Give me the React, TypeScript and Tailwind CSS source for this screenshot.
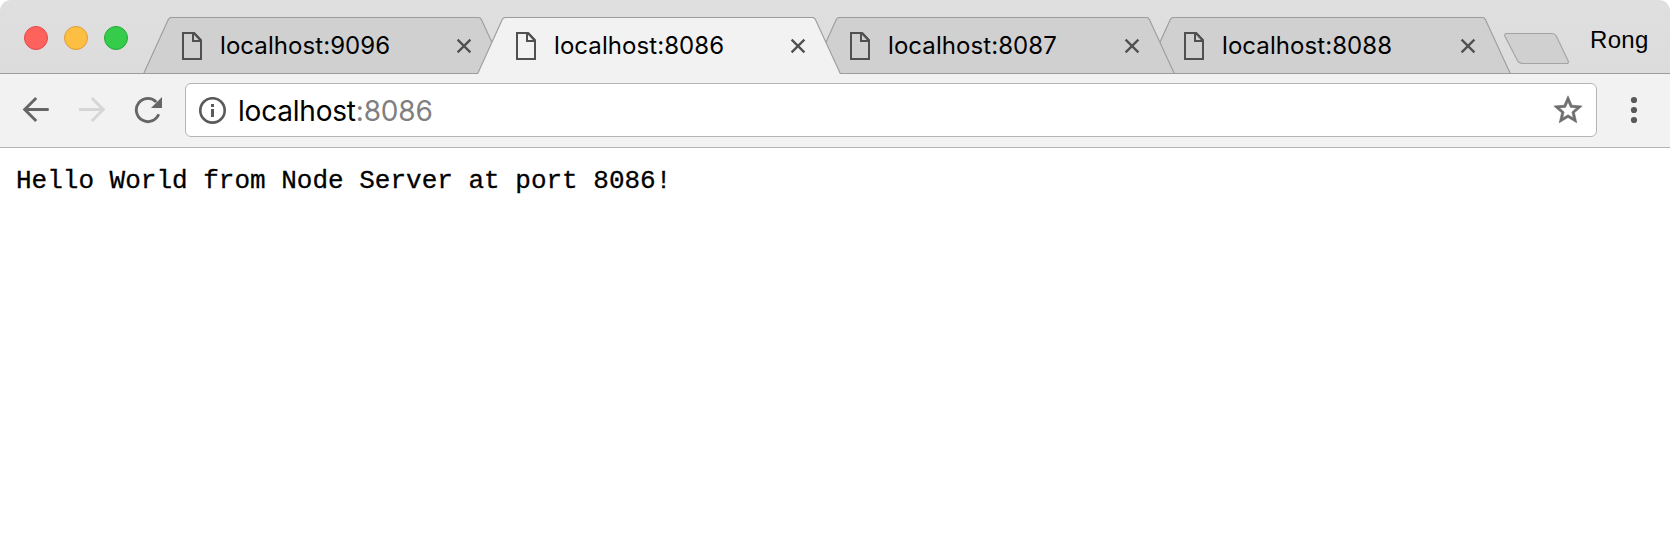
import React from "react";

type TabProps = {
  title: string;
  active?: boolean;
  stack: string;
  wide?: boolean;
};

function PageIcon() {
  return (
    <svg className="block h-7 w-5 shrink-0" viewBox="0 0 20 28" fill="none">
      <path d="M1 1H12L19 8.5V27H1Z" stroke="#505050" strokeWidth="2" />
      <path d="M11 1V9H19" stroke="#505050" strokeWidth="2" />
      <path d="M12 1L19 8.5" stroke="#505050" strokeWidth="2.2" />
    </svg>
  );
}

function CloseIcon() {
  return (
    <svg className="block h-4 w-4 shrink-0" viewBox="0 0 16 16">
      <path d="M1.6 1.6L14.4 14.4M14.4 1.6L1.6 14.4" stroke="#505050" strokeWidth="2.3" fill="none" />
    </svg>
  );
}

function Tab({ title, active = false, stack, wide = false }: TabProps) {
  const w = wide ? 366 : 364;
  const fill = active ? "#f2f2f2" : "#d0d0d0";
  const shape = `M0.5 57L25.3 2.6Q26.2 0.5 28.5 0.5H${w - 28.5}Q${w - 26.6} 0.5 ${w - 25.6} 2.6L${w - 0.5} 57`;
  return (
    <div
      className={`relative -mr-[30px] flex h-[57px] shrink-0 items-start pl-[39px] pt-[15px] ${
        wide ? "w-[366px]" : "w-[364px]"
      } ${stack}`}
    >
      <svg className="absolute inset-0 h-full w-full" viewBox={`0 0 ${w} 57`}>
        <path d={shape} fill={fill} stroke="#9c9c9c" strokeWidth="1.1" />
        {!active && <path d={`M0 56.5H${w}`} stroke="#9c9c9c" />}
      </svg>
      <div className="relative flex w-full items-start">
        <PageIcon />
        <span className="ml-[18px] h-7 w-[228px] whitespace-nowrap font-['Inter','Liberation_Sans',sans-serif] text-[24px] leading-7 tracking-[0.07px] text-black">
          {title}
        </span>
        <span className={wide ? "ml-[10px] mt-1.5" : "ml-2 mt-1.5"}>
          <CloseIcon />
        </span>
      </div>
    </div>
  );
}

export default function App() {
  return (
    <div className="h-[544px] w-[1670px] overflow-hidden bg-white">
      <header className="h-[74px] rounded-t-[11px] bg-[linear-gradient(#dfdfdf,#dcdcdc)]">
        <div className="flex h-[74px] items-start border-b border-[#9c9c9c]">
          <div className="flex w-[143px] shrink-0 gap-4 pl-6 pt-[26px]">
            <span className="h-6 w-6 rounded-full border border-[#e2494a] bg-[#fe625d]" />
            <span className="h-6 w-6 rounded-full border border-[#de9c35] bg-[#fdbf42]" />
            <span className="h-6 w-6 rounded-full border border-[#24a935] bg-[#35cb4b]" />
          </div>
          <div className="isolate mt-[17px] flex shrink-0">
            <Tab title="localhost:9096" stack="z-30" />
            <Tab title="localhost:8086" stack="z-40" active />
            <Tab title="localhost:8087" stack="z-20" />
            <Tab title="localhost:8088" stack="z-10" wide />
          </div>
          <svg className="ml-[22px] mt-8 h-8 w-[68px] shrink-0" viewBox="0 0 68 32">
            <path
              d="M4.2 1.5H49Q52 1.5 53.3 4L65.2 29Q66 31.5 63.5 31.5H19.5Q16 31.5 14.4 28.5L1.8 4Q1 1.5 4.2 1.5Z"
              fill="#d0d0d0"
              stroke="#a3a3a3"
              strokeWidth="1.1"
            />
          </svg>
          <span className="ml-[19px] mt-[26px] whitespace-nowrap font-['Liberation_Sans',Arial,sans-serif] text-[24px] leading-7 tracking-[0.3px] text-black">
            Rong
          </span>
        </div>
      </header>

      <nav className="flex h-[74px] items-start border-b border-[#b5b5b5] bg-[#f2f2f2]">
        <svg className="ml-[22px] mt-[22px] h-7 w-7 shrink-0" viewBox="0 0 28 28" fill="none">
          <path d="M26.7 13.5H3M14.2 2L2.7 13.5L14.2 25" stroke="#666" strokeWidth="2.9" />
        </svg>
        <svg className="ml-7 mt-[22px] h-7 w-7 shrink-0" viewBox="0 0 28 28" fill="none">
          <path d="M1 13.5H25M13.8 2L25.3 13.5L13.8 25" stroke="#d6d6d6" strokeWidth="2.9" />
        </svg>
        <svg className="ml-7 mt-[22px] h-7 w-7 shrink-0" viewBox="0 0 28 28" fill="none">
          <path d="M22.2 5.9A11.6 11.6 0 1 0 24.7 18.3" stroke="#666" strokeWidth="2.9" />
          <path d="M28 1V12H17Z" fill="#666" />
        </svg>
        <div className="ml-[23px] mt-[9px] flex h-[54px] w-[1412px] shrink-0 items-start rounded-[6px] border border-[#b5b5b5] bg-white">
          <svg className="ml-[13px] mt-[13px] h-7 w-7 shrink-0" viewBox="0 0 28 28">
            <circle cx="13.5" cy="13.4" r="12.2" fill="none" stroke="#5a5a5a" strokeWidth="2.6" />
            <path d="M12 12H15V20H12ZM12 7H15V10H12Z" fill="#5a5a5a" />
          </svg>
          <span className="ml-[11px] mt-[11px] whitespace-nowrap font-['Inter','Liberation_Sans',sans-serif] text-[28px] leading-8 tracking-[-0.2px] text-black">
            localhost<span className="text-[#808080]">:8086</span>
          </span>
          <svg
            className="ml-auto mr-[11px] mt-[9px] h-[34px] w-[34px]"
            viewBox="0 0 24 24"
            fill="#6e6e6e"
            stroke="#6e6e6e"
            strokeWidth="0.45"
          >
            <path d="M22 9.24l-7.19-.62L12 2 9.19 8.63 2 9.24l5.46 4.73L5.82 21 12 17.27 18.18 21l-1.63-7.03L22 9.24zM12 15.4l-3.76 2.27 1-4.28-3.32-2.88 4.38-.38L12 6.1l1.71 4.04 4.38.38-3.32 2.88 1 4.28L12 15.4z" />
          </svg>
        </div>
        <svg className="ml-[33px] mt-[22px] h-7 w-2 shrink-0" viewBox="0 0 8 28" fill="#5a5a5a">
          <circle cx="4" cy="4" r="3.1" />
          <circle cx="4" cy="14" r="3.1" />
          <circle cx="4" cy="24" r="3.1" />
        </svg>
      </nav>

      <main className="px-4 pt-[18px]">
        <pre className="font-['Liberation_Mono','Courier_New',monospace] text-[26px] leading-[30px] text-black [-webkit-text-stroke:0.3px_#000]">
          Hello World from Node Server at port 8086!
        </pre>
      </main>
    </div>
  );
}
